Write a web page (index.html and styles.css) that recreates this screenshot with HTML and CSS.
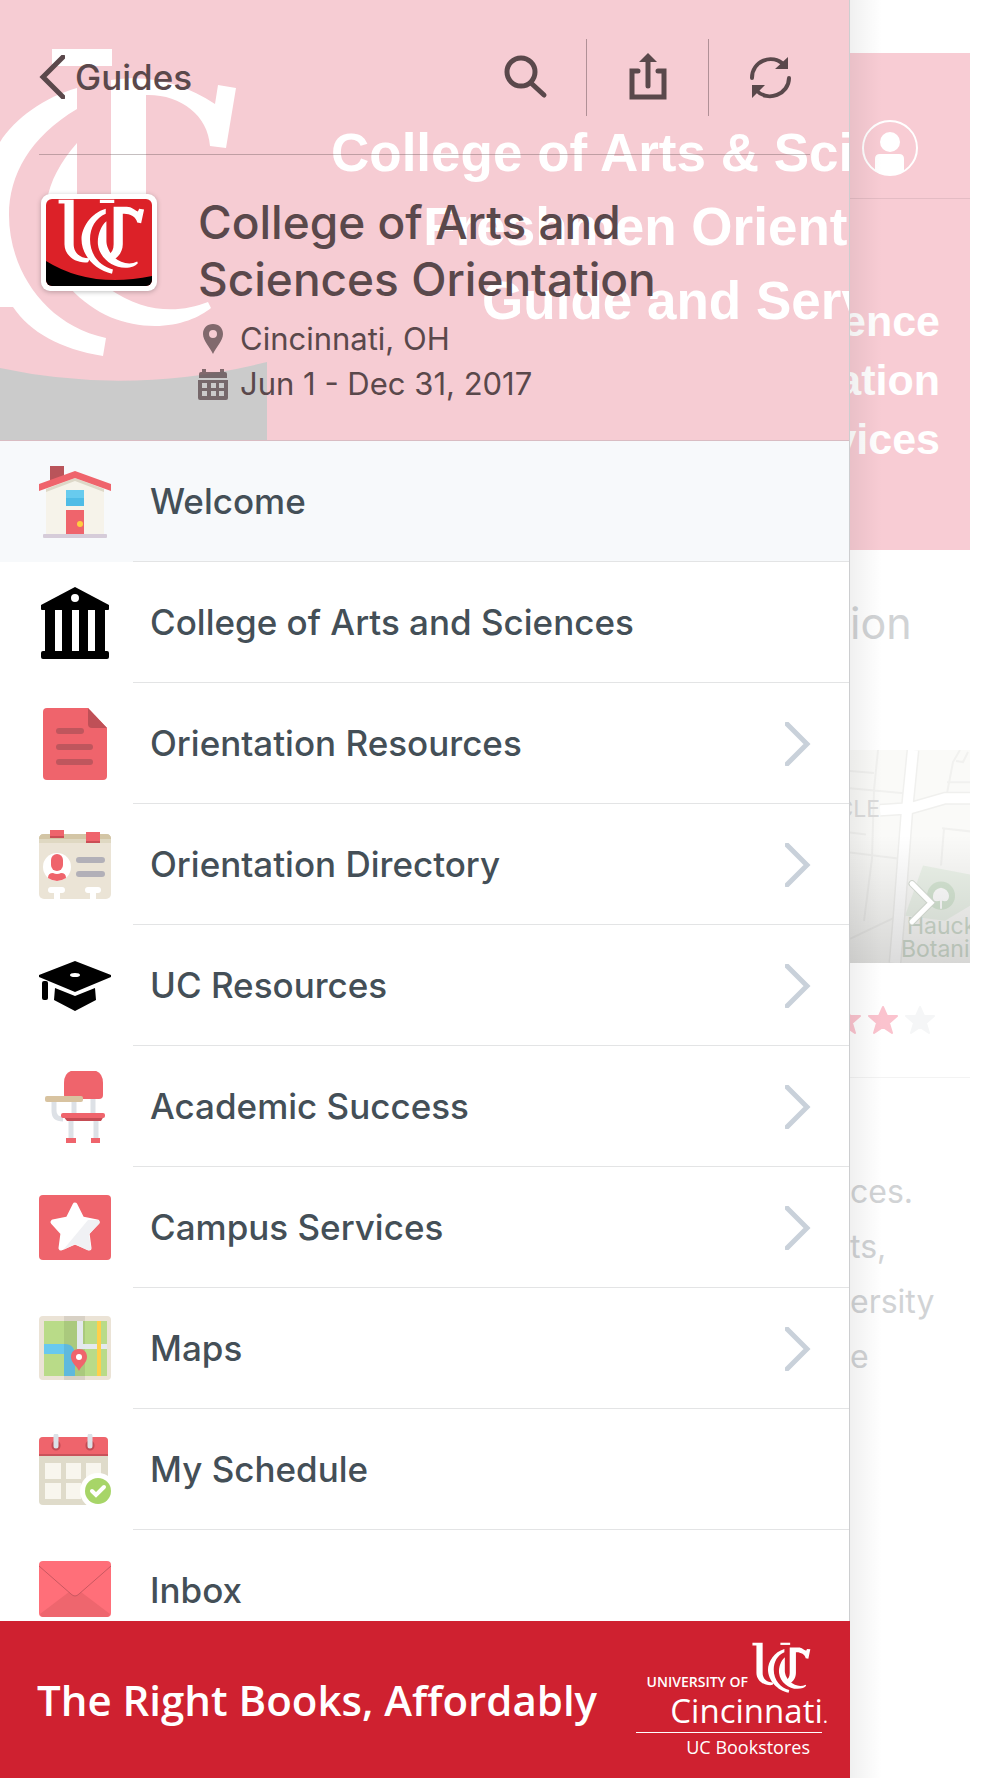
FILE: index.html
```html
<!DOCTYPE html>
<html lang="en">
<head>
  <meta charset="UTF-8" />
  <title>College of Arts and Sciences Orientation</title>
  <meta name="viewport" content="width=device-width, initial-scale=1" />
  <link rel="stylesheet" href="styles.css">
</head>

<body>
  <!-- Shared shapes -->
  <svg class="defs" aria-hidden="true">
    <symbol id="uc-mark" viewBox="170 52 266 232">
      <path d="M172 54H218V190C218 215 236 234 268 233L262 245C225 250 190 225 190 190V66H172Z" />
      <path d="M298 54H342V64H298Z" />
      <path d="M316 82C270 95 242 140 242 175C242 225 285 270 335 280L338 267C300 258 268 225 268 175C268 140 285 110 316 97Z" />
      <path d="M318 120C300 135 290 165 292 190C296 230 335 262 375 262C395 262 408 255 414 248L412 243C390 254 362 249 340 228C322 210 318 190 318 180Z" />
      <path d="M340 76H380C396 76 404 88 414 90L418 82L433 84L424 126L412 124C410 105 385 95 368 97V190C368 215 350 235 335 238L325 222C335 215 340 205 340 190Z" />
    </symbol>
    <symbol id="chevron" viewBox="0 0 26 44">
      <path d="M2 2L22 22L2 42" fill="none" stroke="currentColor" stroke-width="5" stroke-linecap="round" />
    </symbol>
    <symbol id="star" viewBox="0 0 32 32">
      <path d="M16 3L20 12L30 12L22 19L25 29L16 23L7 29L10 19L2 12L12 12Z" fill="currentColor" stroke="currentColor" stroke-width="2" stroke-linejoin="round" />
    </symbol>
  </svg>

  <!-- Side menu -->
  <aside class="drawer">
    <header class="guide-header">
      <div class="cover" aria-hidden="true">
        <svg class="cover-logo" viewBox="0 0 267 440">
          <path fill="#cbcbcb" d="M0 368Q130 396 267 362V440H0Z" />
          <g fill="#fff">
            <path d="M52 49H112V66H52Z" />
            <path d="M77 88C45 97 15 118 0 142V307H13C30 332 60 349 103 356L106 338C45 325 9 270 9 215C9 175 30 137 77 109Z" />
            <path d="M77 143C60 162 50 182 47 200C45 235 50 265 70 288C95 315 125 326 155 326C180 326 200 317 211 308L208 302C180 313 145 314 108 288L77 240Z" />
            <path d="M111 80C150 74 185 84 215 104L218 85L236 88L226 148L210 146C208 115 180 94 146 95V210H111Z" />
          </g>
        </svg>
        <p class="cover-text">College of Arts &amp; Science<br>Freshmen Orientation<br>Guide and Services</p>
      </div>

      <nav class="toolbar">
        <button class="back" type="button">
          <svg class="back-icon" viewBox="0 0 26 44"><path d="M24 2L4 22L24 42" fill="none" stroke="currentColor" stroke-width="5" stroke-linecap="round" /></svg>
          Guides
        </button>
        <div class="actions">
          <button class="action" type="button" aria-label="Search">
            <svg viewBox="0 0 48 48" fill="none" stroke="currentColor" stroke-width="5" stroke-linecap="round"><circle cx="20" cy="19" r="14" /><path d="M30 30L43 42" /></svg>
          </button>
          <button class="action" type="button" aria-label="Share">
            <svg viewBox="0 0 48 48" fill="none" stroke="currentColor" stroke-width="5" stroke-linecap="round"><path d="M14 18H8V44H40V18H34M24 33V8" /><path d="M24 0L33 9H15Z" fill="currentColor" stroke="none" /></svg>
          </button>
          <button class="action" type="button" aria-label="Refresh">
            <svg viewBox="0 0 48 48" fill="none" stroke="currentColor" stroke-width="4" stroke-linecap="round"><path d="M6 25C6 8 26 0 38 12M43 25C43 41 22 50 10 37" /><path d="M42 4V16H29ZM6 45V32H19Z" fill="currentColor" stroke="none" /></svg>
          </button>
        </div>
      </nav>

      <div class="guide">
        <div class="thumb">
          <svg viewBox="0 0 106 87">
            <path fill="#dc2128" d="M0 0H106V87H0Z" />
            <path d="M0 62Q45 90 106 77V87H0Z" />
            <use href="#uc-mark" x="11" y="0" width="89" height="76" fill="#fff" />
          </svg>
        </div>
        <div class="guide-info">
          <h1>College of Arts and Sciences Orientation</h1>
          <p class="meta">
            <svg viewBox="0 0 30 32"><path fill-rule="evenodd" d="M15 1C9 1 5 5 5 11C5 18 12 24 15 31C18 24 25 18 25 11C25 5 21 1 15 1ZM15 7A4 4 0 1 1 15 15A4 4 0 1 1 15 7Z" /></svg>
            Cincinnati, OH
          </p>
          <p class="meta">
            <svg viewBox="0 0 30 32"><path fill-rule="evenodd" d="M1 10V6Q1 4 3 4H4V1H8V4H22V1H26V4H27Q29 4 29 6V10ZM0 12H30V30Q30 32 28 32H2Q0 32 0 30ZM4 15V20H9V15ZM13 15V20H18V15ZM21 15V20H26V15ZM4 23V28H9V23ZM13 23V28H18V23ZM21 23V28H26V23Z" /></svg>
            Jun 1 - Dec 31, 2017
          </p>
        </div>
      </div>
    </header>

    <ul class="menu">
      <li class="active">
        <a href="#">
          <svg class="icon" viewBox="0 0 72 72">
            <path fill="#b9545a" d="M11 0H25V16H11Z" />
            <path fill="#f6f3ea" d="M7 20L36 9L65 20V68H7Z" />
            <path fill="#ddd8c8" d="M7 23L36 12L65 23V26L36 15L7 26Z" />
            <path fill="#ef646c" d="M0 18L36 5L72 18V25L36 12L0 25Z" />
            <path fill="#68cbee" d="M27 24H45V32H27Z" /><path fill="#4fbce6" d="M27 32H45V40H27Z" />
            <path fill="#ef646c" d="M27 44H45V68H27Z" /><circle cx="41" cy="58" r="3" fill="#ffcf3f" />
            <rect x="4" y="68" width="64" height="4" rx="1" fill="#d6ccd9" />
          </svg>
          <span>Welcome</span>
        </a>
      </li>
      <li>
        <a href="#">
          <svg class="icon" viewBox="0 0 72 72">
            <path fill-rule="evenodd" d="M36 0L70 18V22Q70 23 69 23H66V64H68Q70 64 70 66V70Q70 72 68 72H4Q2 72 2 70V66Q2 64 4 64H6V23H3Q2 23 2 22V18ZM36 7A4 4 0 1 0 36 15A4 4 0 1 0 36 7ZM16 23V64H23V23ZM33 23V64H40V23ZM49 23V64H56V23Z" />
          </svg>
          <span>College of Arts and Sciences</span>
        </a>
      </li>
      <li>
        <a href="#">
          <svg class="icon" viewBox="0 0 72 72">
            <path fill="#ef646c" d="M8 0H49L68 20V68Q68 72 64 72H8Q4 72 4 68V4Q4 0 8 0Z" />
            <path fill="#bf5057" d="M49 0L68 20H53Q49 20 49 16Z" />
            <path stroke="#bf565d" stroke-width="6" stroke-linecap="round" d="M20 23H42M20 39H51M20 54H51" />
          </svg>
          <span>Orientation Resources</span>
          <svg class="chevron"><use href="#chevron" /></svg>
        </a>
      </li>
      <li>
        <a href="#">
          <svg class="icon" viewBox="0 0 72 72">
            <rect y="5" width="72" height="65" rx="5" fill="#ebe4d6" />
            <path fill="#dfd8c2" d="M0 14V10Q0 5 5 5H67Q72 5 72 10V14Z" />
            <path fill="#d3c5a5" d="M0 10Q0 5 5 5H67Q72 5 72 10Z" />
            <path fill="#ef646c" d="M11 1H25V7H11ZM47 3H61V12H47Z" /><path fill="#cb4e56" d="M11 7H25V9H11ZM47 12H61V14H47Z" />
            <circle cx="18" cy="38" r="14" fill="#fff" />
            <rect x="12" y="25" width="12" height="17" rx="6" fill="#ef646c" />
            <path fill="#ef646c" d="M9 49Q9 44 14 44Q18 46 22 44Q27 44 27 49Q18 55 9 49Z" />
            <path stroke="#b2b0b8" stroke-width="6" stroke-linecap="round" d="M40 31H63M40 45H63" />
            <path stroke="#fff" stroke-width="6" stroke-linecap="round" d="M12 61H23M18 61V72M49 61H59M54 61V72" />
          </svg>
          <span>Orientation Directory</span>
          <svg class="chevron"><use href="#chevron" /></svg>
        </a>
      </li>
      <li>
        <a href="#">
          <svg class="icon" viewBox="0 0 72 72">
            <path fill-rule="evenodd" d="M36 11L72 25V27L36 42L0 27V25ZM36 23A5 2 0 1 0 36 27A5 2 0 1 0 36 23ZM16 38L36 46L56 38L57 50L36 61L15 50Z" />
            <rect x="3" y="31" width="6" height="19" rx="2" />
          </svg>
          <span>UC Resources</span>
          <svg class="chevron"><use href="#chevron" /></svg>
        </a>
      </li>
      <li>
        <a href="#">
          <svg class="icon" viewBox="0 0 72 72">
            <path fill="none" stroke="#dde1e6" stroke-width="5" d="M15 31V40Q15 48 24 48M35 31V43M54 28V43M32 50V67M57 50V67" />
            <path fill="#ef646c" d="M25 12Q25 -1 38 -1H51Q64 -1 64 12V24Q64 28 60 28H29Q25 28 25 24Z" />
            <rect x="6" y="25" width="38" height="6" rx="2" fill="#d8c3a0" />
            <path fill="#c54c54" d="M24 45H65L62 50H28Z" />
            <rect x="22" y="42" width="44" height="5" rx="2" fill="#ef646c" />
            <path fill="#ef646c" d="M27 67H37V72H27ZM52 67H61V72H52Z" />
          </svg>
          <span>Academic Success</span>
          <svg class="chevron"><use href="#chevron" /></svg>
        </a>
      </li>
      <li>
        <a href="#">
          <svg class="icon" viewBox="0 0 72 72">
            <rect y="3" width="72" height="65" rx="4" fill="#ef646c" />
            <path fill="#fff" stroke="#fff" stroke-width="5" stroke-linejoin="round" d="M36 13L43 27L58 30L48 41L50 56L36 50L22 56L24 41L14 30L29 27Z" />
            <path fill="#f0f1f4" d="M49 28L59 28Q62 30 60 32L50 42L52 57Q50 59 48 58L36 52L24 58Z" />
          </svg>
          <span>Campus Services</span>
          <svg class="chevron"><use href="#chevron" /></svg>
        </a>
      </li>
      <li>
        <a href="#">
          <svg class="icon" viewBox="0 0 72 72">
            <rect y="3" width="72" height="64" rx="4" fill="#ebe3d6" />
            <path fill="#b9db88" d="M5 8H68V63H5Z" />
            <path fill="#68c9f0" d="M5 31H26Q36 31 36 43V63H25V41H5Z" />
            <path fill="#000" opacity=".08" d="M25 3H46V67H25Z" />
            <path fill="#e4e9ee" d="M38 8H44V31H68V36H38Z" />
            <path fill="#ffd04a" d="M58 8H62V63H58Z" />
            <path fill="#ef646c" d="M40 36C35 36 32 39 32 44C32 50 38 53 40 58C42 53 48 50 48 44C48 39 45 36 40 36Z" />
            <circle cx="40" cy="44" r="3" fill="#fff" />
          </svg>
          <span>Maps</span>
          <svg class="chevron"><use href="#chevron" /></svg>
        </a>
      </li>
      <li>
        <a href="#">
          <svg class="icon" viewBox="0 0 72 72">
            <rect y="3" width="69" height="68" rx="4" fill="#dfdbca" />
            <path fill="#ef646c" d="M0 22V7Q0 3 4 3H65Q69 3 69 7V22Z" /><path fill="#c9525a" d="M0 20H69V22H0Z" />
            <path fill="#f8f6ee" d="M6 29H22V45H6ZM27 29H42V45H27ZM47 29H62V45H47ZM6 49H22V65H6ZM27 49H42V65H27Z" />
            <path stroke="#c14b53" stroke-width="9" stroke-linecap="round" d="M17 11V12M51 11V12" />
            <path stroke="#dce1e7" stroke-width="5" stroke-linecap="round" d="M17 2V12M51 2V12" />
            <circle cx="59" cy="57" r="18" fill="#fff" /><circle cx="59" cy="57" r="13" fill="#a7d568" />
            <path fill="none" stroke="#fff" stroke-width="4" stroke-linecap="round" d="M53 57L57 61L65 53" />
          </svg>
          <span>My Schedule</span>
        </a>
      </li>
      <li>
        <a href="#">
          <svg class="icon" viewBox="0 0 72 72">
            <rect y="6" width="72" height="56" rx="4" fill="#ff6f79" />
            <path fill="#ee666e" d="M1 59L30 37H42L71 59Q70 62 68 62H4Q2 62 1 59Z" />
            <path fill="#ff6f79" stroke="#c95860" d="M0 11L32 39Q36 43 40 39L72 11" />
          </svg>
          <span>Inbox</span>
        </a>
      </li>
    </ul>

    <!-- Sponsor banner -->
    <a class="sponsor" href="#">
      <span class="slogan">The Right Books, Affordably</span>
      <span class="brand">
        <span class="brand-top">University of <svg><use href="#uc-mark" /></svg></span>
        <span class="brand-name">Cincinnati<small>.</small></span>
        <span class="brand-sub">UC Bookstores</span>
      </span>
    </a>
  </aside>

  <!-- Page pushed aside by the menu -->
  <main class="page">
    <section class="hero">
      <div class="hero-bar">
        <svg class="avatar" viewBox="0 0 58 58">
          <circle cx="29" cy="29" r="27" fill="none" stroke="#fff" stroke-width="2" />
          <circle cx="29" cy="23" r="10" fill="#fff" />
          <path fill="#fff" d="M14 52V40Q14 35 19 35H38Q43 35 43 40V52Q29 60 14 52Z" />
        </svg>
      </div>
      <p class="hero-text">Science<br>Orientation<br>Services</p>
    </section>
    <h2>ion</h2>
    <div class="map">
      <svg viewBox="0 0 120 212" preserveAspectRatio="none">
        <defs>
          <linearGradient id="shade" x2="0" y2="1">
            <stop offset=".4" stop-color="#000" stop-opacity="0" />
            <stop offset="1" stop-color="#000" stop-opacity=".14" />
          </linearGradient>
        </defs>
        <path fill="#fafaf8" d="M0 0H120V212H0Z" />
        <path fill="#ecf3ea" d="M73 115L120 124V155L95 170L55 165Z" />
        <path fill="none" stroke="#f1f1ef" stroke-width="2" d="M0 21L24 23M28 0L24 40L22 108L14 170M0 38L54 43M0 82L16 84M0 102L48 108M120 32L97 32M97 43L103 12L110 0M106 11L113 12L118 2M92 78L120 81M94 78L91 115M0 188L46 166" />
        <path fill="none" stroke="#f0f0ee" stroke-width="13" d="M63 0L57 60L49 165L45 212M30 60L60 58L95 48H120" />
        <path fill="none" stroke="#fff" stroke-width="10" d="M63 0L57 60L49 165L45 212M30 60L60 58L95 48H120" />
        <circle cx="91" cy="145" r="14" fill="#d6e6d4" />
        <path fill="#fff" d="M90 158V150Q82 152 83 145Q84 138 91 137Q98 138 99 145Q99 152 92 150V158Z" />
        <g class="map-text"><text x="30" y="67" text-anchor="end" fill="#dcdcdc">CLE</text><text x="57" y="183">Hauck</text><text x="51" y="206">Botani</text></g>
        <path fill="url(#shade)" d="M0 0H120V212H0Z" />
        <path fill="none" stroke="#ccd2ca" stroke-width="7" stroke-linecap="round" d="M62 133L81 152L62 171" />
        <path fill="none" stroke="#fff" stroke-width="5" stroke-linecap="round" d="M62 133L81 152L62 171" />
      </svg>
    </div>
    <div class="rating">
      <svg><use href="#star" /></svg>
      <svg><use href="#star" /></svg>
      <svg class="off"><use href="#star" /></svg>
    </div>
    <p class="about">ces.<br>ts,<br>ersity<br>e</p>
  </main>
</body>
</html>
```

FILE: styles.css
```css
* {
  box-sizing: border-box;
}

body {
  display: flex;
  height: 100vh;
  margin: 0;
  overflow: hidden;
  background: #fff;
  font-family: Inter, "Liberation Sans", sans-serif;
}

h1, h2, p, ul {
  margin: 0;
  padding: 0;
}

svg {
  display: block;
  flex: none;
}

button {
  padding: 0;
  border: 0;
  background: none;
  color: inherit;
  font: inherit;
  cursor: pointer;
}

a {
  color: inherit;
  text-decoration: none;
}

.defs {
  position: absolute;
  width: 0;
  height: 0;
}

/* Side menu */
.drawer {
  position: relative;
  z-index: 1;
  display: flex;
  flex-direction: column;
  flex: 0 0 85%;
  min-width: 0;
  border-right: 1px solid #cdced0;
  background: #fff;
}

.drawer::after {
  content: "";
  position: absolute;
  top: 0;
  bottom: 0;
  left: 100%;
  width: 32px;
  margin-left: 1px;
  background: linear-gradient(to right, rgba(0, 0, 0, 0.06), rgba(0, 0, 0, 0));
}

/* Guide header */
.guide-header {
  position: relative;
  flex: none;
  padding: 0 39px 34px;
  border-bottom: 1px solid #d9bcc2;
  background: #f6ccd3;
  color: #5a484b;
}

.cover {
  position: absolute;
  inset: 0;
  overflow: hidden;
}

.cover-logo {
  width: 267px;
  height: 440px;
}

.cover-text {
  position: absolute;
  top: 116px;
  left: 331px;
  color: #fff;
  font: bold 53px/74px "Liberation Sans", sans-serif;
  text-align: right;
  white-space: nowrap;
}

.toolbar {
  position: relative;
  display: flex;
  justify-content: space-between;
  align-items: center;
  height: 155px;
  border-bottom: 1px solid rgba(90, 72, 75, 0.35);
}

.back {
  display: flex;
  align-items: center;
  gap: 10px;
  font-size: 35px;
  font-weight: 500;
}

.back-icon {
  width: 26px;
  height: 44px;
}

.actions {
  display: flex;
  margin-right: -20px;
}

.action {
  display: flex;
  justify-content: center;
  align-items: center;
  width: 122px;
  height: 77px;
}

.action + .action {
  border-left: 1px solid rgba(90, 72, 75, 0.45);
}

.action svg {
  width: 48px;
  height: 48px;
}

.guide {
  position: relative;
  display: flex;
  align-items: flex-start;
  gap: 41px;
  padding: 39px 0 0 2px;
}

.thumb {
  flex: none;
  padding: 5px;
  border-radius: 9px;
  background: #fff;
  box-shadow: 0 1px 5px rgba(0, 0, 0, 0.25);
}

.thumb svg {
  width: 106px;
  height: 87px;
  border-radius: 6px;
}

.guide-info {
  max-width: 520px;
}

h1 {
  margin-bottom: 8px;
  font-size: 46px;
  font-weight: 500;
  line-height: 57px;
}

.meta {
  display: flex;
  align-items: center;
  gap: 12px;
  font-size: 31px;
  line-height: 45px;
}

.meta svg {
  width: 30px;
  height: 32px;
  fill: currentColor;
  opacity: 0.75;
}

/* Menu */
.menu {
  flex: 1;
  min-height: 0;
  overflow: hidden;
  list-style: none;
  color: #444f57;
  font-size: 35px;
  font-weight: 500;
}

.menu a {
  position: relative;
  display: flex;
  align-items: center;
  padding-left: 39px;
}

.menu .active {
  background: #f7f9fb;
}

.icon {
  width: 72px;
  height: 72px;
  margin-right: 22px;
}

.menu span {
  flex: 1;
  padding-left: 17px;
  border-bottom: 1px solid #e3e4e5;
  line-height: 120px;
}

.chevron {
  position: absolute;
  right: 0;
  width: 64px;
  height: 44px;
  padding-right: 38px;
  color: #c9d1da;
}

/* Sponsor banner */
.sponsor {
  display: flex;
  justify-content: space-between;
  align-items: center;
  flex: none;
  height: 157px;
  margin-right: -1px;
  padding: 0 28px 0 37px;
  background: #cf2130;
  color: #fff;
  font-family: "Open Sans", "Noto Sans", sans-serif;
}

.slogan {
  font-size: 42px;
  font-weight: 600;
  white-space: nowrap;
}

.brand {
  display: flex;
  flex-direction: column;
  width: 186px;
  padding-top: 4px;
}

.brand-top {
  display: flex;
  align-items: flex-end;
  justify-content: flex-end;
  gap: 4px;
  height: 52px;
  padding-right: 11px;
  font-size: 14px;
  font-weight: 600;
  line-height: 24px;
  text-transform: uppercase;
  white-space: nowrap;
}

.brand-top svg {
  width: 59px;
  height: 52px;
  fill: #fff;
}

.brand-name {
  margin-right: -6px;
  font-size: 33px;
  line-height: 33px;
  text-align: right;
}

.brand-name small {
  font-size: 20px;
}

.brand-sub {
  padding-right: 12px;
  border-top: 1px solid #fff;
  font-size: 18px;
  line-height: 28px;
  text-align: right;
}

/* Page behind the menu */
.page {
  flex: 1;
  min-width: 0;
  padding-top: 53px;
  overflow: hidden;
  color: #d1d3d5;
}

.hero {
  height: 497px;
  margin-right: 30px;
  overflow: hidden;
  background: #f8ccd4;
}

.hero-bar {
  display: flex;
  align-items: center;
  height: 146px;
  padding: 44px 0 0 11px;
  border-bottom: 1px solid #e4bcc4;
}

.avatar {
  width: 58px;
  height: 58px;
}

.hero-text {
  display: flex;
  justify-content: flex-end;
  padding: 93px 30px 0 0;
  color: #fff;
  font: bold 43px/59px "Liberation Sans", sans-serif;
  text-align: right;
  white-space: nowrap;
}

h2 {
  height: 200px;
  padding-top: 45px;
  font-size: 43px;
  font-weight: 400;
  line-height: 56px;
}

.map {
  height: 213px;
  margin-right: 30px;
}

.map svg {
  width: 100%;
  height: 100%;
}

.map-text {
  fill: #d0dccf;
  font-size: 23px;
}

.rating {
  display: flex;
  justify-content: flex-end;
  gap: 5px;
  height: 115px;
  margin-right: 30px;
  padding: 41px 34px 0 0;
  border-bottom: 1px solid #f3f3f3;
  color: #fbc3ce;
}

.rating svg {
  width: 32px;
  height: 32px;
}

.rating .off {
  color: #f5f6f7;
}

.about {
  padding-top: 86px;
  font-size: 32px;
  line-height: 55px;
}
```
